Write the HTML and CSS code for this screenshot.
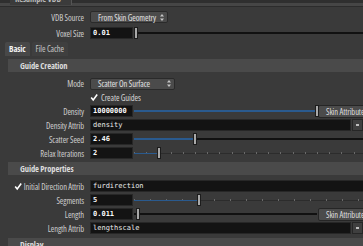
FILE: index.html
```html
<!DOCTYPE html>
<html lang="en">
<head>
    <meta charset="UTF-8">
    <meta name="viewport" content="width=device-width, initial-scale=1.0">
    <title>Guide Groom parameters</title>
    <link rel="stylesheet" href="styles.css">
</head>
<body>

    <div class="top-strip"><span class="top-title">Resample VDB</span></div>

    <div class="parms top-parms">
        <div class="row">
            <span class="label">VDB Source</span>
            <div class="menu menu-vdb"><span>From Skin Geometry</span>
                <svg width="4" height="7" viewBox="0 0 4 7"><path d="M2 0 L4 2.5 H0 Z M2 7 L4 4.5 H0 Z" fill="#c8c8c8"/></svg>
            </div>
        </div>
        <div class="row overflow">
            <span class="label">Voxel Size</span>
            <div class="field num">0.01</div>
            <div class="slider"><div class="track"></div><div class="handle" style="left: 0px"></div></div>
        </div>
    </div>

    <div class="tabs">
        <div class="tab active">Basic</div>
        <div class="tab">File Cache</div>
    </div>

    <div class="tab-panel">
        <div class="folder">Guide Creation</div>

        <div class="row tall">
            <span class="label">Mode</span>
            <div class="menu menu-mode"><span>Scatter On Surface</span>
                <svg width="4" height="7" viewBox="0 0 4 7"><path d="M2 0 L4 2.5 H0 Z M2 7 L4 4.5 H0 Z" fill="#c8c8c8"/></svg>
            </div>
        </div>
        <div class="row short">
            <span class="label"></span>
            <span class="toggle"><svg width="10" height="9" viewBox="0 0 10 9"><path d="M1.5 4.5 L4 7.5 L9 0.8" fill="none" stroke="#fff" stroke-width="2"/></svg></span>
            <span class="toggle-text">Create Guides</span>
        </div>
        <div class="row overflow">
            <span class="label">Density</span>
            <div class="field num">10000000</div>
            <div class="slider"><div class="track"></div><div class="fill" style="width: 182px"></div><div class="handle" style="left: 181px"></div></div>
            <div class="button">Skin Attribute</div>
        </div>
        <div class="row">
            <span class="label">Density Attrib</span>
            <div class="field str">density</div>
            <div class="menu-btn"></div>
        </div>
        <div class="row overflow">
            <span class="label">Scatter Seed</span>
            <div class="field num">2.46</div>
            <div class="slider"><div class="track"></div><div class="fill" style="width: 60px"></div><div class="handle" style="left: 59px"></div></div>
        </div>
        <div class="row overflow">
            <span class="label">Relax Iterations</span>
            <div class="field num">2</div>
            <div class="slider"><div class="track faint"></div><div class="ticks relax"></div><div class="fill thin" style="width: 24px"></div><div class="handle" style="left: 23px"></div></div>
        </div>

        <div class="folder next">Guide Properties</div>

        <div class="row overflow">
            <span class="label"><span class="toggle"><svg width="10" height="9" viewBox="0 0 10 9"><path d="M1.5 4.5 L4 7.5 L9 0.8" fill="none" stroke="#fff" stroke-width="2"/></svg></span>Initial Direction Attrib</span>
            <div class="field str">furdirection</div>
        </div>
        <div class="row overflow">
            <span class="label">Segments</span>
            <div class="field num">5</div>
            <div class="slider"><div class="track faint"></div><div class="ticks segs"></div><div class="fill thin" style="width: 64px"></div><div class="handle" style="left: 63px"></div></div>
        </div>
        <div class="row overflow">
            <span class="label">Length</span>
            <div class="field num">0.011</div>
            <div class="slider"><div class="track"></div><div class="handle" style="left: 2px"></div></div>
            <div class="button">Skin Attribute</div>
        </div>
        <div class="row">
            <span class="label">Length Attrib</span>
            <div class="field str">lengthscale</div>
            <div class="menu-btn"></div>
        </div>

        <div class="folder last">Display</div>
    </div>

</body>
</html>
```

FILE: styles.css
```css
* {
    margin: 0;
    padding: 0;
    box-sizing: border-box;
}
body {
    width: 363px;
    height: 246px;
    overflow: hidden;
    background: #3a3a3a;
    font-family: "Open Sans", "Roboto", sans-serif;
    font-stretch: 75%;
    font-size: 8.5px;
    letter-spacing: -0.1px;
    color: #cdcdcd;
}

.top-strip {
    height: 7px;
    overflow: hidden;
    background: linear-gradient(#2f2f2f 0 3px, #464646 3px 6px, #2c2c2c 6px);
}
.top-title {
    display: block;
    width: 62px;
    margin-left: 10px;
    margin-top: -7px;
    padding-left: 5px;
    line-height: 12px;
    font-weight: bold;
    color: #b8b8b8;
    background: #3b3b3b;
    border-right: 1px solid #555;
}

.parms {
    display: flex;
    flex-direction: column;
}
.top-parms {
    --label-w: 84px;
    padding-top: 3px;
    gap: 2px;
}

.row {
    display: flex;
    align-items: center;
    height: 14px;
}
.row.tall {
    height: 15px;
}
.row.short {
    height: 13px;
}
.row.overflow {
    margin-right: -30px;
}
.label {
    width: var(--label-w);
    flex-shrink: 0;
    margin-right: 6px;
    display: flex;
    justify-content: flex-end;
    align-items: center;
    gap: 2px;
    white-space: nowrap;
}

.field {
    height: 12px;
    background: #131313;
    border: 1px solid #272727;
    padding-left: 2px;
    font-family: "DejaVu Sans Mono", monospace;
    font-stretch: normal;
    letter-spacing: 0;
    font-size: 7px;
    line-height: 10px;
    color: #ececec;
    white-space: nowrap;
}
.field.num {
    width: 43px;
    flex-shrink: 0;
    font-weight: bold;
    color: #fafafa;
}
.field.str {
    flex: 1;
}

.slider {
    flex: 1;
    align-self: stretch;
    position: relative;
    margin-left: 1px;
}
.track {
    position: absolute;
    left: 0;
    right: 0;
    top: 6px;
    height: 2px;
    background: #111;
}
.track.faint {
    top: 7px;
    height: 1px;
    background: #2c2c2c;
}
.ticks {
    position: absolute;
    left: 0;
    right: 0;
    top: 6px;
    height: 2px;
}
.ticks.relax {
    background: repeating-linear-gradient(90deg, #6a6a6a 0 1px, transparent 1px 12.2px);
}
.ticks.segs {
    background: repeating-linear-gradient(90deg, #6a6a6a 0 1px, transparent 1px 16px);
}
.fill {
    position: absolute;
    left: 0;
    top: 6px;
    height: 2px;
    background: #2a5a8e;
}
.fill.thin {
    top: 7px;
    height: 1px;
}
.handle {
    position: absolute;
    top: 1px;
    width: 4px;
    height: 12px;
    background: #a9a9a9;
    border: 1px solid #1c1c1c;
}

.menu {
    height: 12px;
    display: flex;
    align-items: center;
    justify-content: space-between;
    padding: 0 3px 0 7px;
    background: #4b4b4b;
    border: 1px solid #2a2a2a;
    border-radius: 2px;
    color: #e2e2e2;
    white-space: nowrap;
}
.menu-vdb {
    width: 78px;
}
.menu-mode {
    width: 85px;
}

.button {
    width: 75px;
    height: 13px;
    flex-shrink: 0;
    margin-left: 1px;
    padding-left: 7px;
    line-height: 11px;
    background: #4b4b4b;
    border: 1px solid #262626;
    border-radius: 2px;
    color: #dedede;
    white-space: nowrap;
}
.menu-btn {
    width: 11px;
    height: 12px;
    flex-shrink: 0;
    margin-left: 1px;
    display: flex;
    align-items: center;
    justify-content: center;
    background: #3f3f3f;
    border: 1px solid #262626;
}
.menu-btn::after {
    content: "";
    width: 3px;
    height: 2px;
    background: #bdbdbd;
}

.toggle {
    width: 8px;
    height: 8px;
    display: inline-flex;
    align-items: center;
    justify-content: center;
    flex-shrink: 0;
}
.toggle-text {
    margin-left: 3px;
    color: #d6d6d6;
    white-space: nowrap;
}

.tabs {
    display: flex;
    gap: 2px;
    height: 14px;
    margin-top: 2px;
    padding-left: 5px;
}
.tab {
    padding: 0 4px;
    line-height: 13px;
    background: #3f3f3f;
    color: #c6c6c6;
    border-radius: 2px 2px 0 0;
}
.tab.active {
    background: #484848;
    color: #f2f2f2;
    font-weight: bold;
}

.tab-panel {
    --label-w: 76px;
    display: flex;
    flex-direction: column;
    margin-left: 8px;
    padding-top: 3px;
}
.folder {
    height: 13px;
    flex-shrink: 0;
    padding-left: 12px;
    line-height: 13px;
    margin-bottom: 4px;
    background: #4a4a4a;
    font-weight: bold;
    color: #dcdcdc;
}
.folder.next {
    margin-top: 2px;
}
.folder.last {
    margin-top: 3px;
}
```
